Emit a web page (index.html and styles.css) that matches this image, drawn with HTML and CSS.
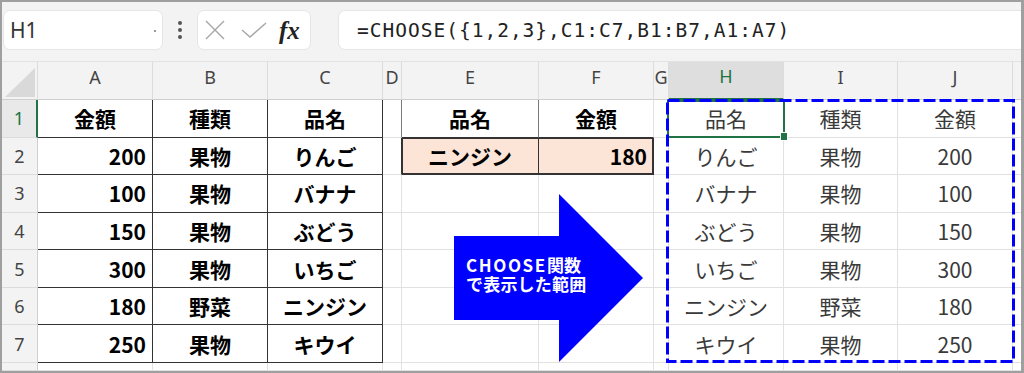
FILE: index.html
```html
<!DOCTYPE html>
<html lang="ja">
<head>
<meta charset="utf-8">
<title>CHOOSE</title>
<link rel="stylesheet" href="styles.css">
</head>
<body>
<div class="frame">
  <div class="toolbar">
    <div class="namebox"><span>H1</span><i class="caret"></i></div>
    <div class="dots">
      <svg width="6" height="20" viewBox="0 0 6 20"><circle cx="3" cy="3" r="2" fill="#555"/><circle cx="3" cy="10" r="2" fill="#555"/><circle cx="3" cy="17" r="2" fill="#555"/></svg>
    </div>
    <div class="fxg">
      <svg class="ic-x" width="20" height="20" viewBox="0 0 20 20"><path d="M1 1 L19 19 M19 1 L1 19" stroke="#a6a6a6" stroke-width="1.4" fill="none"/></svg>
      <svg class="ic-ok" width="26" height="16" viewBox="0 0 26 16"><path d="M1 8 L9 15 L25 1" stroke="#a6a6a6" stroke-width="1.4" fill="none"/></svg>
      <span class="fx">fx</span>
    </div>
    <div class="formula">=CHOOSE({1,2,3},C1:C7,B1:B7,A1:A7)</div>
  </div>
  <div class="sheet">
    <div class="c ch corner"></div>
    <div class="c ch">A</div><div class="c ch">B</div><div class="c ch">C</div><div class="c ch">D</div><div class="c ch">E</div><div class="c ch">F</div><div class="c ch">G</div><div class="c ch chsel">H</div><div class="c ch">I</div><div class="c ch">J</div><div class="c ch last"></div>

    <div class="c rh rhsel">1</div>
    <div class="c b dr db">金額</div><div class="c b dr db">種類</div><div class="c b dr db">品名</div><div class="c mr"></div><div class="c b mr db">品名</div><div class="c b db">金額</div><div class="c"></div><div class="c">品名</div><div class="c">種類</div><div class="c">金額</div><div class="c last"></div>

    <div class="c rh">2</div>
    <div class="c b num dr db">200</div><div class="c b dr db">果物</div><div class="c b dr db">りんご</div><div class="c dr"></div><div class="c b pk pkl dr db">ニンジン</div><div class="c b num pk pkr dr db">180</div><div class="c"></div><div class="c">りんご</div><div class="c">果物</div><div class="c">200</div><div class="c last"></div>

    <div class="c rh">3</div>
    <div class="c b num dr db">100</div><div class="c b dr db">果物</div><div class="c b dr db">バナナ</div><div class="c"></div><div class="c"></div><div class="c"></div><div class="c"></div><div class="c">バナナ</div><div class="c">果物</div><div class="c">100</div><div class="c last"></div>

    <div class="c rh">4</div>
    <div class="c b num dr db">150</div><div class="c b dr db">果物</div><div class="c b dr db">ぶどう</div><div class="c"></div><div class="c"></div><div class="c"></div><div class="c"></div><div class="c">ぶどう</div><div class="c">果物</div><div class="c">150</div><div class="c last"></div>

    <div class="c rh">5</div>
    <div class="c b num dr db">300</div><div class="c b dr db">果物</div><div class="c b dr db">いちご</div><div class="c"></div><div class="c"></div><div class="c"></div><div class="c"></div><div class="c">いちご</div><div class="c">果物</div><div class="c">300</div><div class="c last"></div>

    <div class="c rh">6</div>
    <div class="c b num dr db">180</div><div class="c b dr db">野菜</div><div class="c b dr db">ニンジン</div><div class="c"></div><div class="c"></div><div class="c"></div><div class="c"></div><div class="c">ニンジン</div><div class="c">野菜</div><div class="c">180</div><div class="c last"></div>

    <div class="c rh">7</div>
    <div class="c b num dr db">250</div><div class="c b dr db">果物</div><div class="c b dr db">キウイ</div><div class="c"></div><div class="c"></div><div class="c"></div><div class="c"></div><div class="c">キウイ</div><div class="c">果物</div><div class="c">250</div><div class="c last"></div>

    <div class="c rh"></div>
    <div class="c"></div><div class="c"></div><div class="c"></div><div class="c"></div><div class="c"></div><div class="c"></div><div class="c"></div><div class="c"></div><div class="c"></div><div class="c"></div><div class="c last"></div>

    <svg class="arrow" width="190" height="168" viewBox="0 0 190 168"><polygon points="0,42 105,42 105,0 189,84 105,168 105,126 0,126" fill="#0000ff"/></svg>
    <div class="arrow-text"><span class="lat">CHOOSE</span>関数<br>で表示した範囲</div>

    <div class="selbox"><i class="handle"></i></div>
    <svg class="dashbox" width="349" height="264" viewBox="0 0 349 264"><rect x="1.5" y="1.5" width="346" height="261" fill="none" stroke="#0000ff" stroke-width="3" stroke-dasharray="12 4"/></svg>
  </div>
</div>
</body>
</html>
```

FILE: styles.css
```css
body {
  margin: 0;
  background: #fff;
}

.frame {
  width: 1024px;
  height: 373px;
  box-sizing: border-box;
  border: 2px solid #9f9f9f;
  border-right-width: 3px;
  background: #f3f3f3;
  overflow: hidden;
}

.toolbar {
  height: 60px;
  box-sizing: border-box;
  padding-top: 8px;
  display: flex;
  align-items: flex-start;
  background: #f3f3f3;
  border-bottom: 1px solid #e2e2e2;
}

.namebox {
  position: relative;
  margin-left: 1px;
  width: 160px;
  height: 40px;
  box-sizing: border-box;
  background: #fff;
  border: 1px solid #e6e6e6;
  border-radius: 7px;
  display: flex;
  align-items: center;
  padding-left: 6px;
  font-family: "Noto Sans", "Liberation Sans", sans-serif;
  font-size: 21px;
  color: #333;
}

.caret {
  position: absolute;
  right: 6px;
  top: 19px;
  width: 2px;
  height: 2px;
  background: #999;
}

.dots {
  width: 34px;
  height: 40px;
  display: flex;
  align-items: center;
  justify-content: center;
}

.fxg {
  width: 114px;
  height: 40px;
  box-sizing: border-box;
  background: #fff;
  border: 1px solid #e6e6e6;
  border-radius: 7px;
  display: flex;
  align-items: center;
  padding-left: 7px;
}

.ic-ok {
  margin-left: 16px;
}

.fx {
  margin-left: 12px;
  font-family: "Liberation Serif", "DejaVu Serif", serif;
  font-style: italic;
  font-weight: 700;
  font-size: 25px;
  color: #222;
  line-height: 1;
}

.formula {
  flex: 1;
  margin-left: 27px;
  height: 40px;
  box-sizing: border-box;
  background: #fff;
  border: 1px solid #e6e6e6;
  border-right: none;
  border-radius: 7px 0 0 7px;
  display: flex;
  align-items: center;
  padding-left: 18px;
  font-family: "DejaVu Sans Mono", "Liberation Mono", monospace;
  font-size: 19.5px;
  letter-spacing: 1px;
  color: #222;
  white-space: nowrap;
}

.sheet {
  position: relative;
  height: 309px;
  display: grid;
  grid-template-columns: 36px 115px 115px 115px 19px 137px 115px 15px 115px 114px 115px 1fr;
  grid-template-rows: 38px repeat(7, 37.57px) 1fr;
  background: #fff;
}

.c {
  box-sizing: border-box;
  border-right: 1px solid #e1e1e1;
  border-bottom: 1px solid #e1e1e1;
  display: flex;
  align-items: center;
  justify-content: center;
  font-family: "Noto Sans CJK JP", "Noto Sans", sans-serif;
  font-size: 21px;
  color: #3a3a3a;
  white-space: nowrap;
  overflow: hidden;
  background: #fff;
}

.c.last {
  border-right: none;
}

.ch {
  background: #f3f3f3;
  font-family: "Noto Sans", "Liberation Sans", sans-serif;
  font-size: 18px;
  color: #444;
  border-right-color: #dcdcdc;
  border-bottom-color: #cfcfcf;
  padding-bottom: 8px;
}

.ch.chsel {
  background: #dedede;
  color: #217346;
  border-bottom: 2px solid #217346;
}

.corner {
  position: relative;
}

.corner::after {
  content: "";
  position: absolute;
  left: 3px;
  top: 6px;
  width: 30px;
  height: 29px;
  background: #d9d9d9;
  clip-path: polygon(100% 0, 100% 100%, 0 100%);
}

.rh {
  background: #f3f3f3;
  font-family: "Noto Sans", "Liberation Sans", sans-serif;
  font-size: 18px;
  color: #444;
  border-right-color: #cfcfcf;
  border-bottom-color: #dcdcdc;
}

.rh.rhsel {
  background: #e9e9e9;
  color: #217346;
  border-right: 2px solid #217346;
}

.b {
  font-weight: 700;
  color: #000;
}

.num {
  justify-content: flex-end;
  padding-right: 6px;
}

.dr {
  border-right-color: #333;
}

.db {
  border-bottom-color: #333;
}

.mr {
  border-right-color: #7a7a7a;
}

.pk {
  background: #fce4d6;
}

.pkl {
  box-shadow: inset 1px 1px 0 #333, inset 0 -1px 0 #333;
}

.pkr {
  box-shadow: inset 0 1px 0 #333, inset -1px -1px 0 #333;
}

.arrow {
  position: absolute;
  left: 452px;
  top: 132px;
}

.arrow-text {
  position: absolute;
  left: 464px;
  top: 193px;
  font-family: "Noto Sans CJK JP", "Noto Sans", sans-serif;
  font-weight: 700;
  font-size: 17px;
  line-height: 19px;
  letter-spacing: 0.2px;
  color: #fff;
  white-space: nowrap;
}

.arrow-text .lat {
  letter-spacing: 1.6px;
}

.selbox {
  position: absolute;
  left: 665px;
  top: 38px;
  width: 118px;
  height: 38px;
  box-sizing: border-box;
  border: 2px solid #217346;
}

.handle {
  position: absolute;
  right: -5px;
  bottom: -5px;
  width: 6px;
  height: 7px;
  background: #217346;
  border: 1px solid #fff;
}

.dashbox {
  position: absolute;
  left: 664px;
  top: 37px;
}
```
